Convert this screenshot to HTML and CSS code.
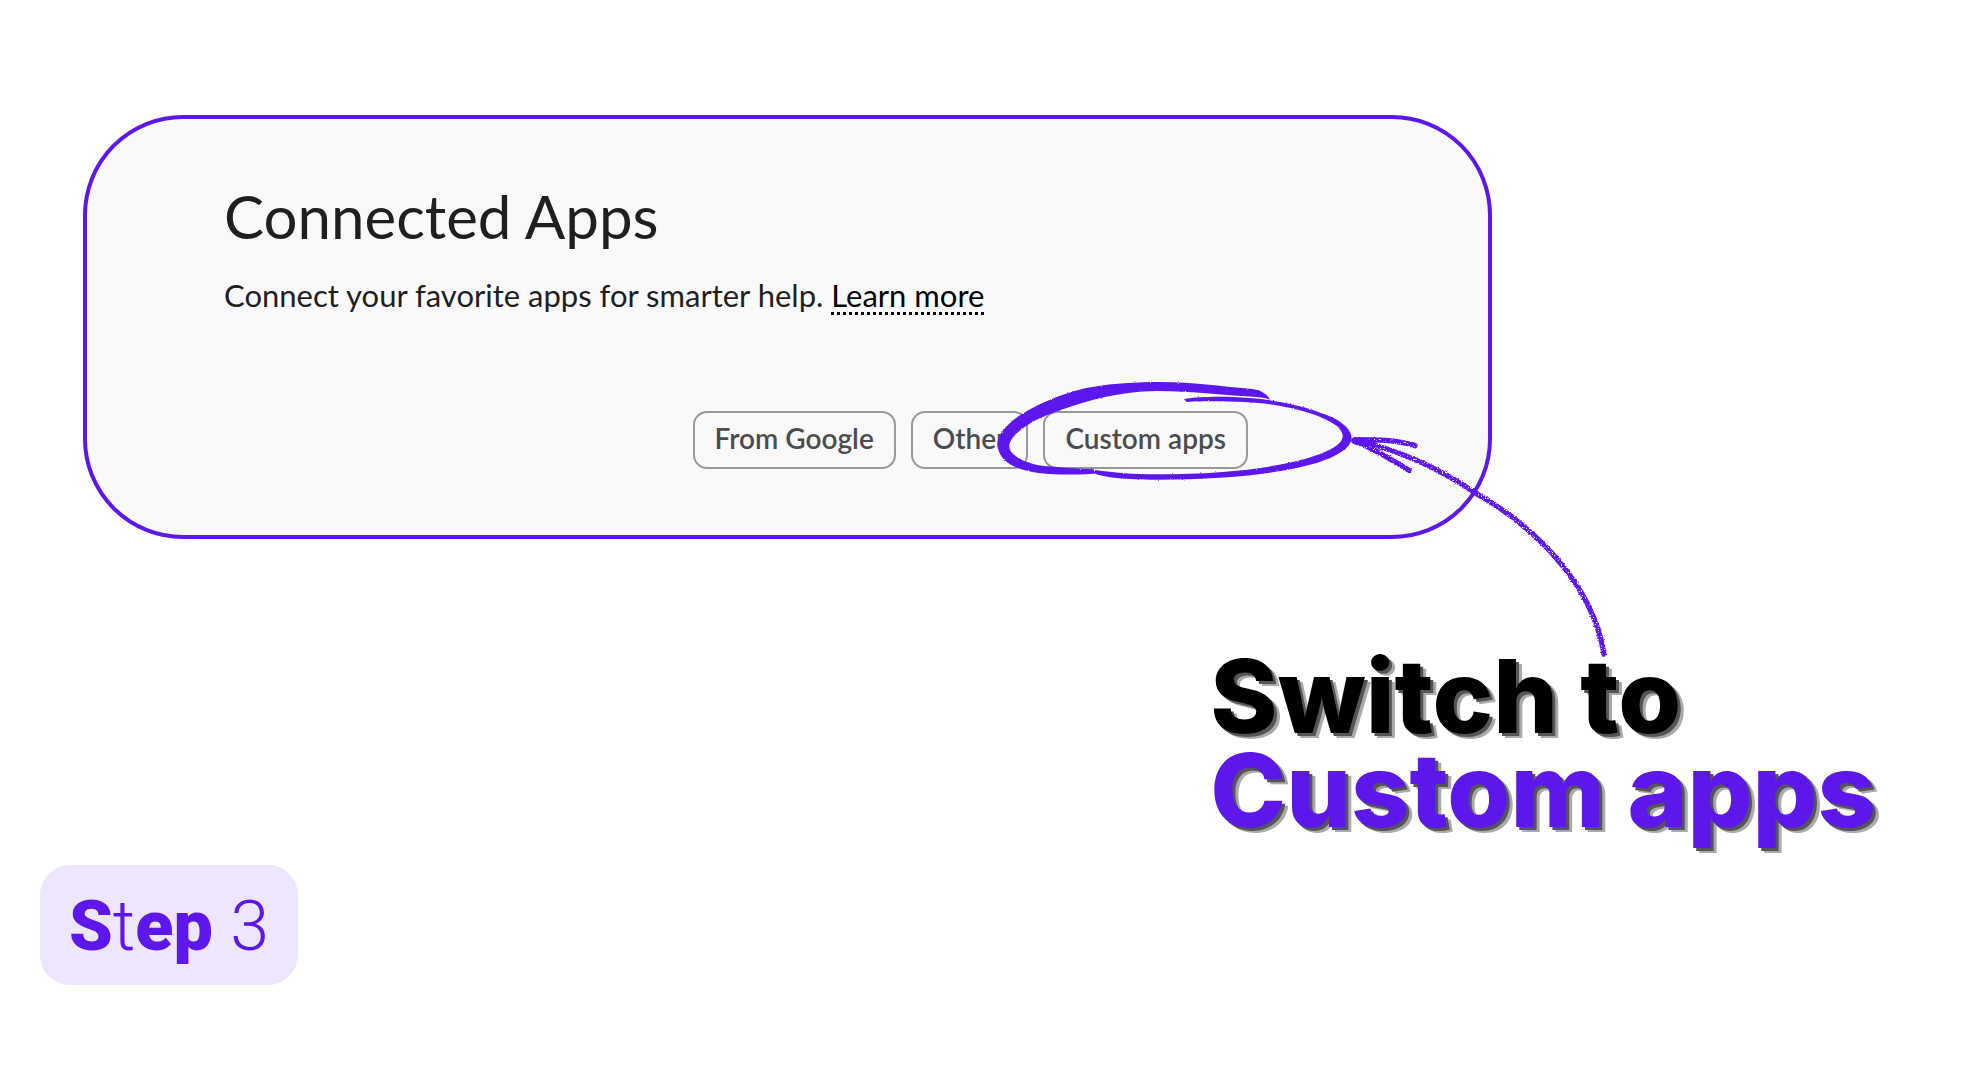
FILE: index.html
```html
<!DOCTYPE html>
<html lang="en">
<head>
<meta charset="utf-8">
<meta name="viewport" content="width=device-width, initial-scale=1">
<title>Step 3 - Switch to Custom apps</title>
<link rel="stylesheet" href="styles.css">
</head>
<body>
<main class="page">
  <section class="card">
    <h1 class="card-title">Connected Apps</h1>
    <p class="card-text">Connect your favorite apps for smarter help. <a class="learn" href="#">Learn more</a></p>
    <div class="filters">
      <button class="chip" type="button">From Google</button>
      <button class="chip" type="button">Other</button>
      <div class="circled">
        <button class="chip" type="button">Custom apps</button>
        <svg class="circle" viewBox="0 0 1200 390" aria-hidden="true">
          <defs>
            <filter id="rough" x="-5%" y="-5%" width="110%" height="110%">
              <feTurbulence type="fractalNoise" baseFrequency="0.3" numOctaves="2" seed="4" result="n"/>
              <feDisplacementMap in="SourceGraphic" in2="n" scale="6" xChannelSelector="R" yChannelSelector="G"/>
            </filter>
          </defs>
          <g filter="url(#rough)">
            <path d="M870 92 C862 74 842 62 810 59 C720 52 640 39 540 39 C450 39 370 46 315 58 C215 82 130 128 94 158 C64 184 48 212 53 234 C60 270 88 292 135 304 C190 320 270 318 342 314 L342 301 C290 300 240 294 200 292 C160 288 120 274 100 256 C84 240 84 226 98 206 C126 172 180 144 240 124 C320 94 420 67 530 66 C640 67 740 79 830 84 C848 85 860 89 870 92Z"/>
            <path d="M612 90 C670 80 760 82 820 88 C900 96 970 110 1040 138 C1092 158 1116 186 1115 208 C1112 238 1072 262 1010 282 C900 314 740 332 530 332 C440 332 370 326 340 312 L346 303 C400 311 460 316 530 316 C700 315 840 303 950 276 C1020 259 1066 238 1082 218 C1092 204 1090 190 1072 172 C1030 140 960 121 880 107 C800 97 700 95 620 99Z"/>
          </g>
        </svg>
      </div>
    </div>
  </section>
  <section class="callout">
    <h2 class="callout-text">Switch to<br><span class="accent">Custom apps</span></h2>
    <svg class="arrow" viewBox="0 0 960 750" aria-hidden="true">
      <defs>
        <filter id="chalk" x="-5%" y="-5%" width="110%" height="110%">
          <feTurbulence type="fractalNoise" baseFrequency="0.25" numOctaves="2" seed="9" result="n"/>
          <feDisplacementMap in="SourceGraphic" in2="n" scale="8" xChannelSelector="R" yChannelSelector="G" result="d"/>
          <feColorMatrix in="n" type="matrix" values="0 0 0 0 0  0 0 0 0 0  0 0 0 0 0  0 9 0 0 -2.4" result="m"/>
          <feComposite in="d" in2="m" operator="in"/>
        </filter>
      </defs>
      <g filter="url(#chalk)">
        <path class="stroke" d="M80 66 C200 88 330 148 436 220 C610 318 790 490 825 705"/>
        <path class="stroke" d="M80 62 C140 62 200 62 258 80"/>
        <path class="stroke" d="M80 68 C140 90 190 124 240 154"/>
      </g>
      <path class="tip" d="M66 66 Q68 52 84 56 L140 64 L140 82 L84 76 Q70 78 66 66Z"/>
    </svg>
  </section>
  <p class="badge">S<span class="thin">t</span>ep <span class="thin">3</span></p>
</main>
</body>
</html>
```
FILE: styles.css
```css
* { box-sizing: border-box; }

body {
  margin: 0;
  background: #fff;
  font-family: Lato, "Open Sans", sans-serif;
}

.page {
  display: flex;
  flex-direction: column;
  min-height: 100vh;
  padding: 115px 0 93px;
}

.card {
  margin: 0 488px 0 83px;
  padding: 65px 240px 66px 137px;
  border: 4px solid #5d17eb;
  border-radius: 100px;
  background: #f9f9f9;
  color: #1f1f1f;
}

.card-title {
  margin: 0;
  font-size: 60px;
  font-weight: 400;
  line-height: 64px;
}

.card-text {
  margin: 29px 0 0;
  font-size: 31px;
  line-height: 36px;
}

.learn {
  display: inline-block;
  color: #000;
  line-height: 34px;
  text-decoration: none;
  border-bottom: 3px dotted #000;
}

.filters {
  display: flex;
  justify-content: flex-end;
  gap: 15px;
  margin-top: 96px;
}

.chip {
  display: block;
  height: 58px;
  padding: 0 20px 5px;
  border: 2px solid #999;
  border-radius: 14px;
  background: transparent;
  color: #4a4c4f;
  font-family: inherit;
  font-size: 28px;
  font-weight: 600;
}

.circled { position: relative; }

.circle {
  position: absolute;
  left: -63px;
  top: -42px;
  width: 400px;
  height: 130px;
  fill: #5d17eb;
  pointer-events: none;
}

.callout {
  position: relative;
  align-self: flex-end;
  margin: 110px 104px 0 0;
}

.callout-text {
  margin: 0;
  color: #000;
  font-family: Inter, sans-serif;
  font-size: 102px;
  font-weight: 800;
  line-height: 94px;
  text-shadow: 3px 3px #555, 6px 5px #aaa;
}

.accent { color: #5d17eb; }

.arrow {
  position: absolute;
  left: 119px;
  top: -230px;
  width: 320px;
  height: 250px;
  pointer-events: none;
}

.stroke {
  fill: none;
  stroke: #5d17eb;
  stroke-width: 16;
  stroke-linecap: round;
}

.tip { fill: #5d17eb; }

.badge {
  align-self: flex-start;
  margin: 28px 0 0 40px;
  padding: 2px 29px 0;
  border-radius: 30px;
  background: #ede6fd;
  color: #5d17eb;
  font-family: Roboto, sans-serif;
  font-size: 70px;
  font-weight: 900;
  line-height: 118px;
}

.thin { font-weight: 300; }
```
